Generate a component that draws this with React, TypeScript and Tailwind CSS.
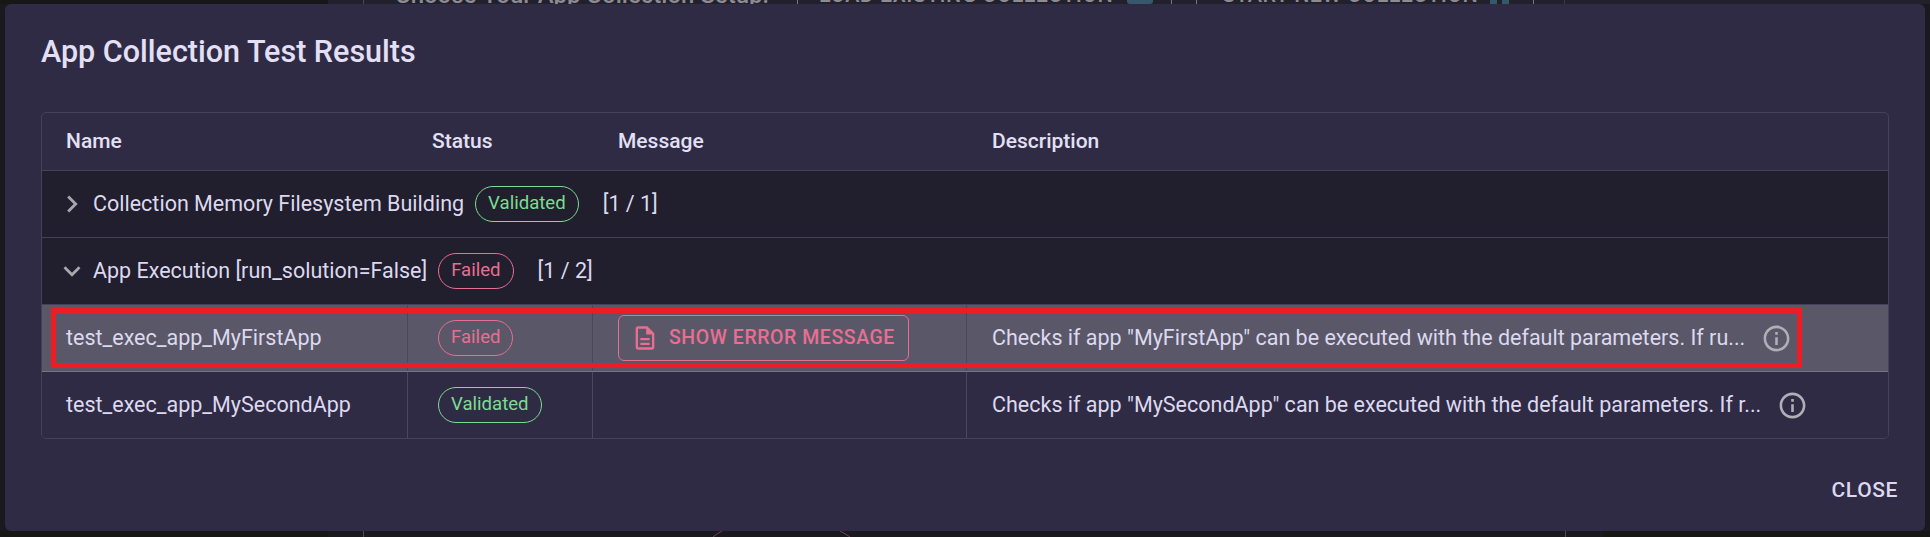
const font = { fontFamily: "Roboto, sans-serif" };

function Chip({ label, kind }: { label: string; kind: "ok" | "fail" }) {
  const color = kind === "ok" ? "border-[#7bdc91] text-[#7bdc91]" : "border-[#e76f92] text-[#e76f92]";
  return (
    <span className={`inline-flex h-9 shrink-0 items-center rounded-[18px] border px-[12px] text-[18.6px] ${color}`}>
      {label}
    </span>
  );
}

function InfoIcon() {
  return (
    <svg viewBox="0 0 24 24" className="h-[31px] w-[31px] shrink-0 fill-[#b0aeb6]">
      <path d="M11 7h2v2h-2zm0 4h2v6h-2zm1-9C6.48 2 2 6.48 2 12s4.48 10 10 10 10-4.48 10-10S17.52 2 12 2zm0 18c-4.41 0-8-3.59-8-8s3.59-8 8-8 8 3.59 8 8-3.59 8-8 8z" />
    </svg>
  );
}

function GroupRow({ open, label, chip, kind, count }: { open: boolean; label: string; chip: string; kind: "ok" | "fail"; count: string }) {
  return (
    <div className="flex h-[67px] items-center border-b border-[#45415a] bg-[#211e2d] pl-[13px] text-[21.5px] text-[#dcd9ef]">
      <svg viewBox="0 0 24 24" className="h-[34px] w-[34px] shrink-0 fill-[#a8a6ae]">
        {open ? (
          <path d="M7.41 8.59 12 13.17l4.59-4.58L18 10l-6 6-6-6z" />
        ) : (
          <path d="M8.59 16.59 13.17 12 8.59 7.41 10 6l6 6-6 6z" />
        )}
      </svg>
      <span className="ml-[4px]">{label}</span>
      <span className="ml-[11px] flex">
        <Chip label={chip} kind={kind} />
      </span>
      <span className="ml-6">{count}</span>
    </div>
  );
}

function TestRow({ name, chip, kind, desc, showError, highlight }: { name: string; chip: string; kind: "ok" | "fail"; desc: string; showError?: boolean; highlight?: boolean }) {
  return (
    <div className={`relative grid grid-cols-[366px_185px_374px_1fr] text-[21.5px] text-[#dcd9ef] ${highlight ? "h-[67px] border-b border-[#77748a] bg-[#5a5768]" : "h-[66px] bg-[#302b45]"}`}>
      <div className="flex items-center border-r border-[#4b4760] pl-[24px]">{name}</div>
      <div className="flex items-center border-r border-[#4b4760] pl-[30px]">
        <Chip label={chip} kind={kind} />
      </div>
      <div className="flex items-center border-r border-[#4b4760] pl-[25px]">
        {showError && (
          <button className="flex h-[46px] w-[291px] items-center rounded-[6px] border border-[#e76f92] pl-[12px] text-[19.5px] font-medium tracking-[0.55px] text-[#e76f92]">
            <svg viewBox="0 0 24 24" className="mr-[10px] h-[28px] w-[28px] shrink-0 fill-[#e76f92]">
              <path d="M8 16h8v2H8zm0-4h8v2H8zm6-10H6c-1.1 0-2 .9-2 2v16c0 1.1.89 2 1.99 2H18c1.1 0 2-.9 2-2V8l-6-6zm4 18H6V4h7v5h5v11z" />
            </svg>
            SHOW ERROR MESSAGE
          </button>
        )}
      </div>
      <div className="flex items-center gap-[16px] pl-[25px]">
        <span className="whitespace-nowrap">{desc}</span>
        <InfoIcon />
      </div>
      {highlight && (
        <div className="absolute bottom-[3px] left-[9px] top-[3px] w-[1751px] border-[5px] border-[#ee1c25]" />
      )}
    </div>
  );
}

export default function App() {
  return (
    <div className="relative h-[537px] w-[1930px] overflow-hidden bg-[#1a1920]" style={font}>
      {/* page behind the dialog, only its edges show */}
      <div className="flex h-[4px] overflow-hidden bg-[#22202a] text-[24px] font-medium leading-[4px] text-[#8d8b93]">
        <div className="h-full w-[328px] shrink-0 bg-[#171717]" />
        <div className="h-full w-[36px] shrink-0 border-r border-[#4b4956]" />
        <div className="ml-[31px] w-[381px] shrink-0 -translate-y-[7px] whitespace-nowrap">Choose Your App Collection Setup:</div>
        <div className="h-full w-[22px] shrink-0 border-r border-[#77757f]" />
        <div className="ml-[21px] w-[308px] shrink-0 -translate-y-[7px] whitespace-nowrap text-[21.5px] tracking-[0.35px]">LOAD EXISTING COLLECTION</div>
        <div className="h-full w-[26px] shrink-0 rounded-b-[3px] bg-[#35596b]" />
        <div className="h-full w-[19px] shrink-0 border-r border-[#77757f]" />
        <div className="h-full w-[25px] shrink-0 border-r border-[#77757f]" />
        <div className="ml-[25px] w-[268px] shrink-0 -translate-y-[7px] whitespace-nowrap text-[21.5px] tracking-[0.35px]">START NEW COLLECTION</div>
        <div className="flex h-full w-[19px] shrink-0 gap-[5px]">
          <div className="h-full w-[7px] bg-[#35596b]" />
          <div className="h-full w-[7px] bg-[#35596b]" />
        </div>
        <div className="h-full w-[25px] shrink-0 border-r border-[#77757f]" />
        <div className="h-full w-[31px] shrink-0 border-r border-[#3a3843]" />
      </div>
      <div className="absolute bottom-0 left-0 flex h-[6px] w-full bg-[#1a1920]">
        <div className="h-full w-[328px] shrink-0 bg-[#171717]" />
        <div className="h-full w-[36px] shrink-0 border-r border-[#4b4956]" />
        <div className="h-full w-[1202px] shrink-0 border-r border-[#4b4956]" />
        <div className="h-full w-[37px] shrink-0" />
        <div className="h-full flex-1 bg-[#171717]" />
        <svg viewBox="0 0 140 6" className="absolute bottom-0 left-[712px] h-[6px] w-[140px] fill-none stroke-[#7a3f55]">
          <path d="M10 0 Q5 2.5 1 6M128 0 Q133 2.5 138 6" />
        </svg>
      </div>

      <div className="absolute left-[5px] top-[4px] flex h-[527px] w-[1920px] flex-col rounded-[6px] bg-[#302b45] pl-[36px] pr-[36px]">
        <h2 className="pt-[30px] text-[30.5px] font-medium leading-[36px] text-[#e3e0f5]">App Collection Test Results</h2>

        <div className="mt-[42px] overflow-hidden rounded-[5px] border border-[#45415a]">
          <div className="grid h-[58px] grid-cols-[366px_186px_374px_1fr] items-center border-b border-[#45415a] pl-[24px] text-[21px] font-medium text-[#e3e0f5]">
            <div>Name</div>
            <div>Status</div>
            <div>Message</div>
            <div>Description</div>
          </div>
          <GroupRow open={false} label="Collection Memory Filesystem Building" chip="Validated" kind="ok" count="[1 / 1]" />
          <GroupRow open label="App Execution [run_solution=False]" chip="Failed" kind="fail" count="[1 / 2]" />
          <TestRow
            highlight
            showError
            name="test_exec_app_MyFirstApp"
            chip="Failed"
            kind="fail"
            desc={'Checks if app "MyFirstApp" can be executed with the default parameters. If ru...'}
          />
          <TestRow
            name="test_exec_app_MySecondApp"
            chip="Validated"
            kind="ok"
            desc={'Checks if app "MySecondApp" can be executed with the default parameters. If r...'}
          />
        </div>

        <div className="-mr-[9px] mt-auto flex justify-end pb-[25px]">
          <button className="text-[21px] font-medium tracking-[0.6px] text-[#dcd9ef]">CLOSE</button>
        </div>
      </div>
    </div>
  );
}
